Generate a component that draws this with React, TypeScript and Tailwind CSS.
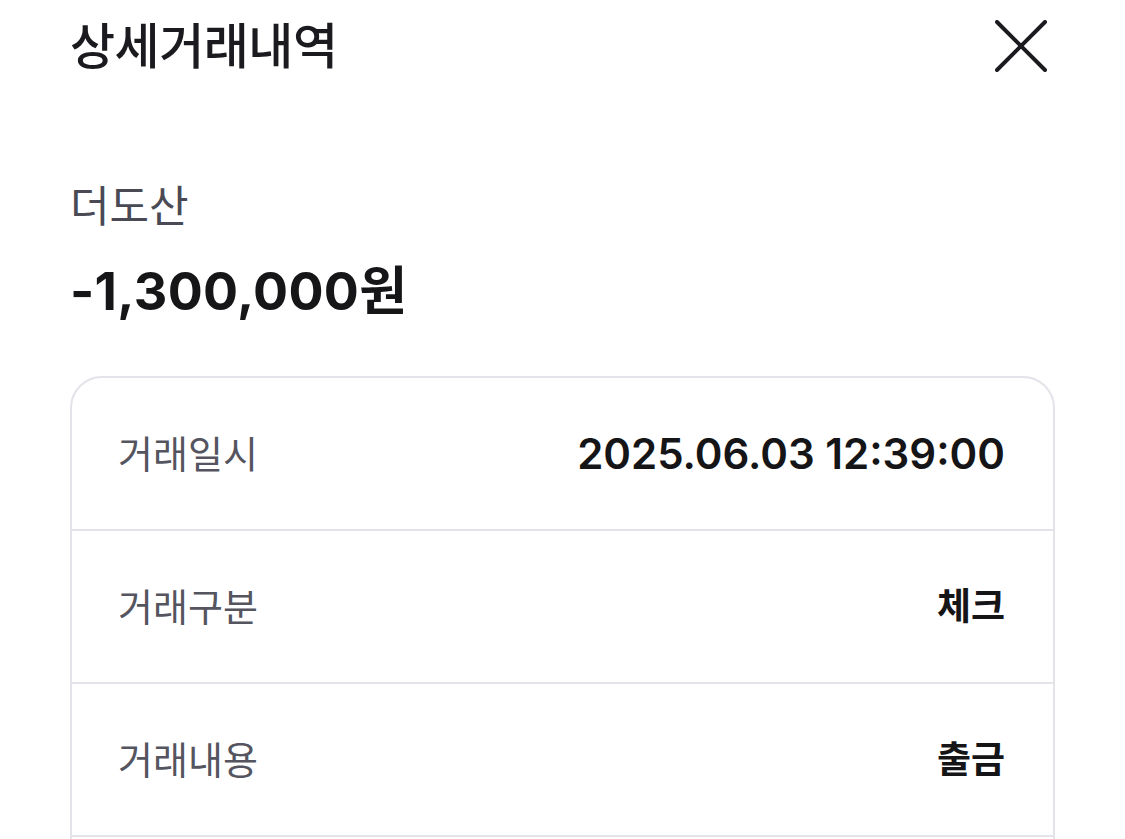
const rows = [
  { label: "거래일시", value: "2025.06.03 12:39:00", numeric: true },
  { label: "거래구분", value: "체크", numeric: false },
  { label: "거래내용", value: "출금", numeric: false },
];

export default function App() {
  return (
    <div className="h-[839px] w-[1125px] overflow-hidden bg-white font-['Inter','Noto_Sans_CJK_KR',sans-serif]">
      <div className="flex h-[92px] items-center justify-between pl-[70px] pr-[78px]">
        <h1 className="text-[49px] font-medium leading-none tracking-[-0.5px] text-[#1b1b1f]">
          상세거래내역
        </h1>
        <button className="text-[#1b1b1f]">
          <svg width="52" height="52" viewBox="0 0 52 52" fill="none">
            <path
              d="M2 2L50 50M50 2L2 50"
              stroke="currentColor"
              strokeWidth="4"
              strokeLinecap="round"
            />
          </svg>
        </button>
      </div>

      <div className="px-[70px] pt-[93px]">
        <p className="text-[43px] leading-none text-[#4a4a55]">더도산</p>
        <p className="mt-[38px] text-[52px] font-bold leading-none tracking-[0.3px] text-[#161618]">
          -1,300,000원
        </p>

        <div className="mt-[58px] overflow-hidden rounded-[32px] border-2 border-[#e3e3ea]">
          {rows.map((row, i) => (
            <div
              key={row.label}
              className={
                i === 0
                  ? "flex h-[151px] items-center justify-between pl-[46px] pr-[48px]"
                  : "flex h-[153px] items-center justify-between border-t-2 border-[#e3e3ea] pl-[46px] pr-[48px]"
              }
            >
              <span className="text-[38px] leading-none text-[#55555f]">{row.label}</span>
              <span
                className={
                  row.numeric
                    ? "ml-[2px] text-[42px] font-semibold leading-none text-[#151517]"
                    : "text-[37px] font-semibold leading-none text-[#151517]"
                }
              >
                {row.value}
              </span>
            </div>
          ))}
          {/* next row is below the fold */}
          <div className="h-[153px] border-t-2 border-[#e3e3ea]" />
        </div>
      </div>
    </div>
  );
}
